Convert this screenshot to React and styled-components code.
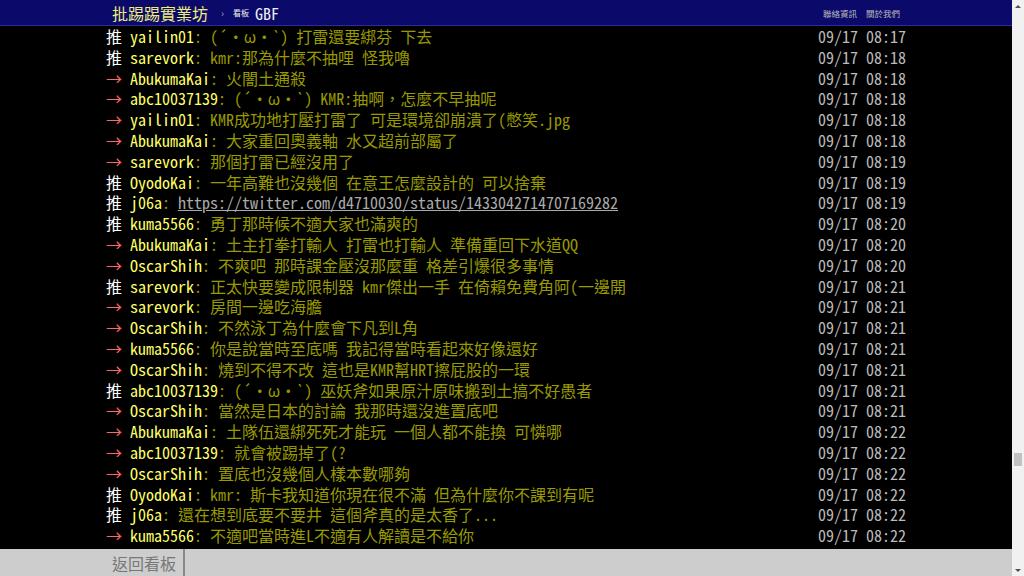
import React from "react";
import styled, { createGlobalStyle } from "styled-components";

const FONT = `"Noto Sans Mono CJK TC", "Noto Serif CJK TC", "Noto Sans CJK TC", "Liberation Mono", monospace`;

const GlobalStyle = createGlobalStyle`
  html, body {
    margin: 0;
    padding: 0;
    height: 100%;
    overflow: hidden;
    background: #000;
  }
  #root {
    height: 100%;
  }
`;

const Page = styled.div`
  display: flex;
  height: 100vh;
  font-family: ${FONT};
`;

const Main = styled.div`
  flex: 1;
  min-width: 0;
  display: flex;
  flex-direction: column;
`;

const TopBar = styled.header`
  height: 25px;
  flex: none;
  background: #0b0a6b;
  border-bottom: 1px solid #2c2c96;
`;

const Inner = styled.div`
  width: 800px;
  height: 100%;
  margin: 0 auto;
  padding: 0 ${(p) => p.$pad || 0}px;
  box-sizing: border-box;
  display: flex;
  align-items: center;
`;

const Logo = styled.a`
  font-size: 16px;
  color: #eeee77;
  text-decoration: none;
`;

const Crumb = styled.span`
  margin-left: 13px;
  font-size: 10px;
  color: #9a9ab8;
`;

const BoardLabel = styled.span`
  margin-left: 9px;
  font-size: 8px;
  color: #eee;
`;

const BoardName = styled.a`
  margin-left: 6px;
  font-size: 16px;
  color: #eee;
  text-decoration: none;
`;

const RightLinks = styled.nav`
  margin-left: auto;
  display: flex;
  gap: 9px;
`;

const SmallLink = styled.a`
  font-size: 8.5px;
  color: #bbb;
  text-decoration: none;
`;

const Content = styled.main`
  flex: 1;
`;

const PushList = styled.div`
  width: 800px;
  margin: 0 auto;
`;

const Row = styled.div`
  display: flex;
  height: 20.8px;
  line-height: 20.8px;
  font-size: 16px;
  white-space: nowrap;
`;

const Tag = styled.span`
  flex: none;
  width: 24px;
  color: ${(p) => (p.$arrow ? "#f66" : "#fff")};
`;

const UserId = styled.span`
  flex: none;
  color: #ff6;
`;

const Text = styled.span`
  flex: 1;
  min-width: 0;
  color: #990;
`;

const Link = styled.a`
  color: #aaa;
  text-decoration: underline;
`;

const Time = styled.span`
  flex: none;
  color: #bbb;
`;

const BottomBar = styled.footer`
  height: 27px;
  flex: none;
  background: #cdcdcd;
`;

const BackButton = styled.a`
  height: 100%;
  display: flex;
  align-items: center;
  padding: 0 7px 0 6px;
  font-size: 16px;
  color: #777;
  text-decoration: none;
  border-right: 2px solid #8a8a8a;
`;

const Scrollbar = styled.div`
  width: 12px;
  flex: none;
  display: flex;
  flex-direction: column;
  background: #f1f1f1;
`;

const ScrollButton = styled.div`
  height: 12px;
  flex: none;
  display: flex;
  align-items: center;
  justify-content: center;

  &::before {
    content: "";
    border-left: 3px solid transparent;
    border-right: 3px solid transparent;
    ${(p) => (p.$down ? "border-top" : "border-bottom")}: 3px solid #505050;
  }
`;

const Track = styled.div`
  flex: 1;
  display: flex;
  flex-direction: column;
  align-items: center;
`;

const Thumb = styled.div`
  width: 8px;
  height: 13px;
  background: #c1c1c1;
`;

const pushes = [
  ["推", "yailin01", "(´・ω・`) 打雷還要綁芬 下去", "09/17 08:17"],
  ["推", "sarevork", "kmr:那為什麼不抽哩 怪我嚕", "09/17 08:18"],
  ["→", "AbukumaKai", "火闇土通殺", "09/17 08:18"],
  ["→", "abc10037139", "(´・ω・`) KMR:抽啊，怎麼不早抽呢", "09/17 08:18"],
  ["→", "yailin01", "KMR成功地打壓打雷了 可是環境卻崩潰了(憋笑.jpg", "09/17 08:18"],
  ["→", "AbukumaKai", "大家重回奧義軸 水又超前部屬了", "09/17 08:18"],
  ["→", "sarevork", "那個打雷已經沒用了", "09/17 08:19"],
  ["推", "OyodoKai", "一年高難也沒幾個 在意王怎麼設計的 可以捨棄", "09/17 08:19"],
  ["推", "j06a", null, "09/17 08:19", "https://twitter.com/d4710030/status/1433042714707169282"],
  ["推", "kuma5566", "勇丁那時候不適大家也滿爽的", "09/17 08:20"],
  ["→", "AbukumaKai", "土主打拳打輸人 打雷也打輸人 準備重回下水道QQ", "09/17 08:20"],
  ["→", "OscarShih", "不爽吧 那時課金壓沒那麼重 格差引爆很多事情", "09/17 08:20"],
  ["推", "sarevork", "正太快要變成限制器 kmr傑出一手 在倚賴免費角阿(一邊開", "09/17 08:21"],
  ["→", "sarevork", "房間一邊吃海膽", "09/17 08:21"],
  ["→", "OscarShih", "不然泳丁為什麼會下凡到L角", "09/17 08:21"],
  ["→", "kuma5566", "你是說當時至底嗎 我記得當時看起來好像還好", "09/17 08:21"],
  ["→", "OscarShih", "燒到不得不改 這也是KMR幫HRT擦屁股的一環", "09/17 08:21"],
  ["推", "abc10037139", "(´・ω・`) 巫妖斧如果原汁原味搬到土搞不好愚者", "09/17 08:21"],
  ["→", "OscarShih", "當然是日本的討論 我那時還沒進置底吧", "09/17 08:21"],
  ["→", "AbukumaKai", "土隊伍還綁死死才能玩 一個人都不能換 可憐哪", "09/17 08:22"],
  ["→", "abc10037139", "就會被踢掉了(?", "09/17 08:22"],
  ["→", "OscarShih", "置底也沒幾個人樣本數哪夠", "09/17 08:22"],
  ["推", "OyodoKai", "kmr: 斯卡我知道你現在很不滿 但為什麼你不課到有呢", "09/17 08:22"],
  ["推", "j06a", "還在想到底要不要井 這個斧真的是太香了...", "09/17 08:22"],
  ["→", "kuma5566", "不適吧當時進L不適有人解讀是不給你", "09/17 08:22"],
];

const App = () => {
  return (
    <Page>
      <GlobalStyle />
      <Main>
        <TopBar>
          <Inner $pad={6}>
            <Logo href="#">批踢踢實業坊</Logo>
            <Crumb>›</Crumb>
            <BoardLabel>看板</BoardLabel>
            <BoardName href="#">GBF</BoardName>
            <RightLinks>
              <SmallLink href="#">聯絡資訊</SmallLink>
              <SmallLink href="#">關於我們</SmallLink>
            </RightLinks>
          </Inner>
        </TopBar>
        <Content>
          <PushList>
            {pushes.map(([tag, user, text, time, url], i) => (
              <Row key={i}>
                <Tag $arrow={tag === "→"}>{tag}</Tag>
                <UserId>{user}</UserId>
                <Text>
                  : {url ? <Link href="#">{url}</Link> : text}
                </Text>
                <Time>{time}</Time>
              </Row>
            ))}
          </PushList>
        </Content>
        <BottomBar>
          <Inner>
            <BackButton href="#">返回看板</BackButton>
          </Inner>
        </BottomBar>
      </Main>
      <Scrollbar>
        <ScrollButton />
        <Track>
          <Thumb style={{ marginTop: 441 }} />
        </Track>
        <ScrollButton $down />
      </Scrollbar>
    </Page>
  );
};

export default App;
